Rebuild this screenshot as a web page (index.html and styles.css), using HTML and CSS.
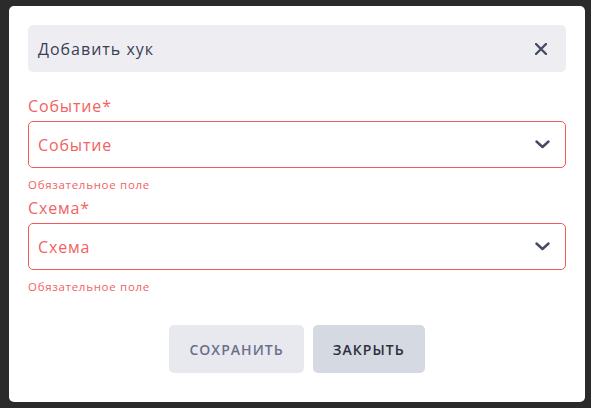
FILE: index.html
```html
<!DOCTYPE html>
<html lang="ru">
<head>
<meta charset="utf-8">
<link rel="stylesheet" href="styles.css">
</head>
<body>
<div class="modal">
  <div class="modal-header">
    <span class="modal-title">Добавить хук</span>
    <svg class="close-icon" width="12" height="12" viewBox="0 0 12 12"><path d="M1 1 L11 11 M11 1 L1 11" stroke="#454b66" stroke-width="2.4" stroke-linecap="round"/></svg>
  </div>
  <div class="field first">
    <div class="field-label">Событие*</div>
    <div class="select">
      <span class="select-value">Событие</span>
      <svg class="chevron" width="15" height="9" viewBox="0 0 15 9"><path d="M1.5 1.5 L7.5 7 L13.5 1.5" fill="none" stroke="#454b66" stroke-width="2.4" stroke-linecap="round" stroke-linejoin="round"/></svg>
    </div>
    <div class="field-error">Обязательное поле</div>
  </div>
  <div class="field">
    <div class="field-label">Схема*</div>
    <div class="select">
      <span class="select-value">Схема</span>
      <svg class="chevron" width="15" height="9" viewBox="0 0 15 9"><path d="M1.5 1.5 L7.5 7 L13.5 1.5" fill="none" stroke="#454b66" stroke-width="2.4" stroke-linecap="round" stroke-linejoin="round"/></svg>
    </div>
    <div class="field-error">Обязательное поле</div>
  </div>
  <div class="actions">
    <button class="btn btn-save">СОХРАНИТЬ</button>
    <button class="btn btn-close">ЗАКРЫТЬ</button>
  </div>
</div>
</body>
</html>
```
FILE: styles.css
```css
html, body {
  margin: 0;
  padding: 0;
}
body {
  background: #2b2b2b;
  font-family: "Open Sans", "DejaVu Sans", sans-serif;
  height: 408px;
  overflow: hidden;
}
.modal {
  box-sizing: border-box;
  width: 576px;
  height: 396px;
  margin: 6px 0 0 9px;
  background: #ffffff;
  border-radius: 5px;
  padding: 19px 19px 29px;
}
.modal-header {
  box-sizing: border-box;
  height: 47px;
  background: #eeeef2;
  border-radius: 5px;
  display: flex;
  align-items: center;
  justify-content: space-between;
  padding: 0 19px 0 10px;
}
.modal-title {
  font-size: 16px;
  letter-spacing: 1px;
  color: #3a3e54;
}
.field {
  margin-top: 5px;
}
.field.first {
  margin-top: 24px;
}
.field-label {
  font-size: 16px;
  line-height: 20px;
  letter-spacing: 0.85px;
  color: #f36262;
  margin-bottom: 5px;
}
.select {
  box-sizing: border-box;
  height: 47px;
  border: 1px solid #f15b5b;
  border-radius: 5px;
  display: flex;
  align-items: center;
  justify-content: space-between;
  padding: 0 15px 0 9px;
}
.select-value {
  font-size: 16px;
  letter-spacing: 0.85px;
  color: #f36262;
}
.field-error {
  margin-top: 9px;
  font-size: 11.5px;
  line-height: 16px;
  letter-spacing: 0.7px;
  color: #f36262;
}
.actions {
  margin-top: 30px;
  display: flex;
  justify-content: center;
  gap: 9px;
}
.btn {
  height: 48px;
  border: none;
  border-radius: 5px;
  padding: 0 20px;
  font-family: inherit;
  font-size: 14px;
  font-weight: 600;
  letter-spacing: 1.05px;
}
.btn-save {
  background: #e8e9ef;
  color: #6a7089;
}
.btn-close {
  background: #d5d9e2;
  color: #2c2f3d;
}
```
